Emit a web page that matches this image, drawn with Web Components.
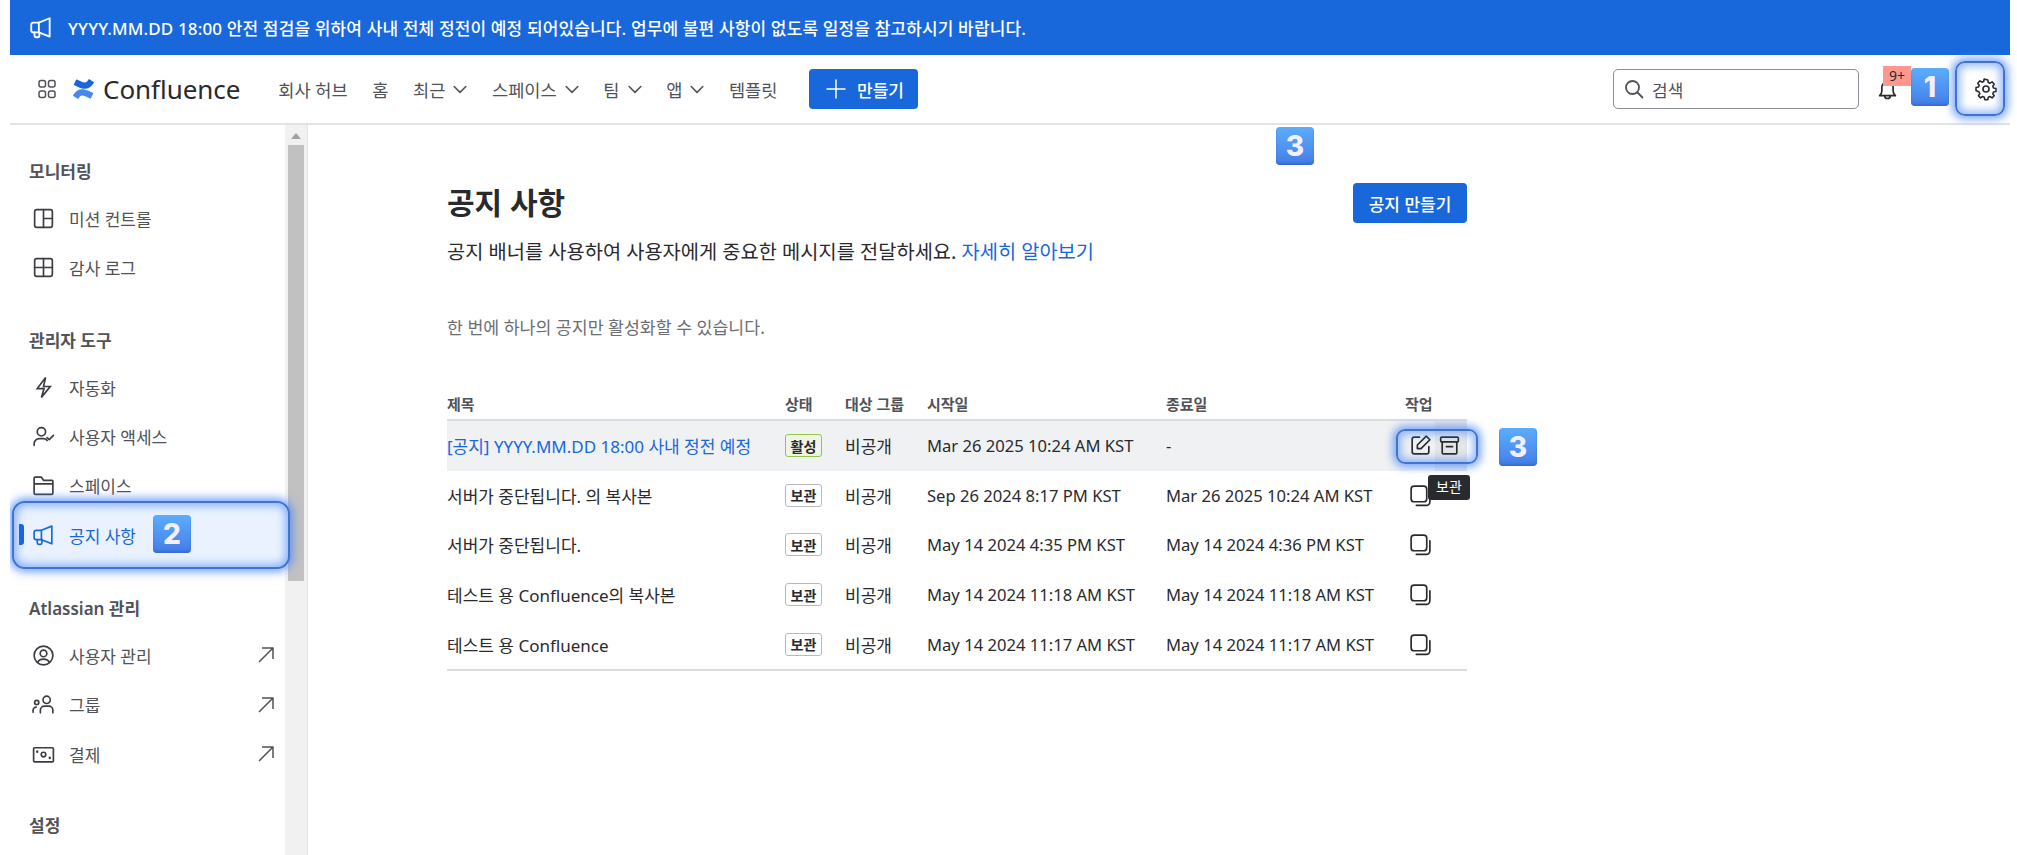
<!DOCTYPE html>
<html lang="ko"><head><meta charset="utf-8"><title>공지 사항</title>
<style>
html,body{margin:0;padding:0;background:#fff;height:855px;overflow:hidden;font-family:"Noto Sans","Noto Sans CJK KR",sans-serif;color:#292a2e}
</style></head><body>
<x-app></x-app>
<script>
const ICONS={
 mega:'<path d="M10 7v9l10 4V3L10 7Z"/><path d="M10 7H5a2 2 0 0 0-2 2v5a2 2 0 0 0 2 2h5"/><path d="M6 16v3a1.500 1.500 0 0 0 1.500 1.500H9a1.500 1.500 0 0 0 1.500-1.500v-3"/>',
 grid:'<rect x="4" y="3.500" width="6.500" height="6.500" rx="2"/><rect x="13.500" y="3.500" width="6.500" height="6.500" rx="2"/><rect x="4" y="14" width="6.500" height="6.500" rx="2"/><rect x="13.500" y="14" width="6.500" height="6.500" rx="2"/>',
 search:'<circle cx="10.500" cy="10.500" r="6.500"/><path d="m15.500 15.500 5 5"/>',
 bell:'<path d="M5 17.500h14c-1.400-1.300-2-2.600-2-4.500v-3a5 5 0 0 0-10 0v3c0 1.900-.6 3.200-2 4.500Z"/><path d="M9.500 17.500a2.500 2.500 0 0 0 5 0"/>',
 gear:'<circle cx="12" cy="12" r="3"/><path d="m13.800 3 .5 2.500 1.700.7 2.100-1.400 2.100 2.500-1.400 2 .7 1.700 2.500.5v3l-2.500.5-.7 1.700 1.400 2.100-2.100 2.100-2.100-1.400-1.700.7-.5 2.500h-3l-.5-2.500-1.700-.7-2.100 1.400-2.100-2.100 1.400-2.100-.7-1.700L2 13.500v-3l2.500-.5.7-1.700-1.400-2 2.100-2.500 2.100 1.400 1.700-.7.5-2.500Z"/>',
 chevron:'<path d="m5 9 7 7 7-7"/>',
 plus:'<path d="M12 3v18M3 12h18"/>',
 split:'<rect x="3.500" y="3.500" width="17" height="17" rx="2"/><path d="M12 3.500v17M12 12h8.500"/>',
 table:'<rect x="3.500" y="3.500" width="17" height="17" rx="2"/><path d="M12 3.500v17M3.500 12h17"/>',
 bolt:'<path d="M14 2.500 6 13h6.500L10 21.500 18.500 11H12Z" stroke-linejoin="miter"/>',
 usercheck:'<circle cx="10" cy="7.500" r="4"/><path d="M3 20.500v-1.500a5 5 0 0 1 5-5h4c1.500 0 2.800.7 3.500 1.800"/><path d="m15.500 13 2 2 4-4"/>',
 folder:'<path d="M4 20.500h16a1 1 0 0 0 1-1V8a1 1 0 0 0-1-1h-8L10 4H4a1 1 0 0 0-1 1v14.500a1 1 0 0 0 1 1ZM3 10.500h18"/>',
 usercircle:'<circle cx="12" cy="12" r="9"/><circle cx="12" cy="10" r="3.200"/><path d="M6.500 18.500c.8-2 2.500-3 5.500-3s4.700 1 5.500 3"/>',
 people:'<circle cx="15" cy="7.500" r="3.500"/><circle cx="5.500" cy="10" r="2"/><path d="M9 20v-2.500a4 4 0 0 1 4-4h4a4 4 0 0 1 4 4V20"/><path d="M2 19.500v-2a3 3 0 0 1 3-3"/>',
 money:'<rect x="2.500" y="5.500" width="19" height="13.500" rx="1"/><circle cx="12" cy="12" r="2.200"/><path d="M6 9v.5M18 15v.5" stroke-width="2.200"/>',
 ext:'<path d="M5 19 19 5M8 5h11v11" stroke-linecap="butt"/>',
 edit:'<path d="M11 4H6a2 2 0 0 0-2 2v12a2 2 0 0 0 2 2h12a2 2 0 0 0 2-2v-5"/><path d="M9 15v-3.500L17.500 3 21 6.500 12.500 15Z"/>',
 archive:'<rect x="3.500" y="4" width="17" height="4.500" rx="1"/><path d="M5 8.500V19a1 1 0 0 0 1 1h12a1 1 0 0 0 1-1V8.500M9 13h6"/>',
 copy:'<rect x="3" y="3" width="15" height="15" rx="3"/><path d="M21 8.500V18a3.500 3.500 0 0 1-3.500 3.500H8"/>'
};
const GLOW='box-shadow:0 0 9px 3px rgba(75,135,250,.75),inset 0 0 9px 3px rgba(75,135,250,.6)';
function def(name,css,html){
 class E extends HTMLElement{
  constructor(){super();this.attachShadow({mode:'open'});}
  connectedCallback(){ if(this._d)return; this._d=1;
   const h=typeof html==='function'?html(this):html;
   this.shadowRoot.innerHTML='<style>'+css+'</style>'+h; }
 }
 customElements.define(name,E);
}
def('x-icon',':host{display:inline-flex;flex:none;width:var(--s,20px);height:var(--s,20px)}svg{width:100%;height:100%;fill:none;stroke:currentColor;stroke-width:var(--w,1.700);stroke-linecap:round;stroke-linejoin:round}',
 el=>'<svg viewBox="0 0 24 24">'+ICONS[el.getAttribute('name')]+'</svg>');

def('x-step',':host{position:absolute;display:flex;align-items:center;justify-content:center;width:38px;height:38px;border-radius:4px;background:linear-gradient(180deg,#5cadfb 0%,#4b8cf0 70%,#4279e0 100%);box-shadow:inset 0 -2px 2px rgba(40,90,200,.45);color:#f4efff;font:800 28px/1 "Inter","Noto Sans",sans-serif;z-index:5}','<slot></slot>');

def('x-banner',':host{display:flex;align-items:center;height:55px;background:#1868db;color:#fff;font-size:17px;letter-spacing:.14px;font-weight:500;padding-left:18px;--s:26px;--w:1.700}span{margin-left:14px}','<x-icon name="mega"></x-icon><span><slot></slot></span>');

def('x-nav-link',':host{display:inline-flex;align-items:center;gap:8px;color:#505258;font-size:17.600px;--s:20px;--w:1.900;white-space:nowrap}x-icon{margin:0 -3px}',
 el=>'<slot></slot>'+(el.hasAttribute('menu')?'<x-icon name="chevron"></x-icon>':''));

def('x-button',':host{display:inline-flex;align-items:center;justify-content:center;height:40px;border-radius:4px;background:#1868db;color:#fff;font-size:17px;font-weight:500;box-sizing:border-box;white-space:nowrap;gap:9px}','<slot></slot>');

def('x-topnav',`
 :host{display:flex;align-items:center;height:68px;border-bottom:2px solid #e2e3e5;position:relative;padding:0 4px 0 25px;--gray:#505258}
 .grid{color:#505258;--s:24px;--w:1.500}
 .logo{display:flex;align-items:center;margin-left:14px;gap:9px}
 .logo svg{width:21px;height:20px}
 .logo b{font:400 26px/1 "Noto Sans",sans-serif;color:#292a2e;letter-spacing:-.05px}
 nav{display:flex;align-items:center;margin-left:38px;gap:24.600px}
 x-button{margin-left:32px;width:109px;--s:24px;--w:1.500}
 .right{margin-left:auto;display:flex;align-items:center}
 .search{width:246px;height:40px;box-sizing:border-box;border:1px solid #8c8f97;border-radius:5px;display:flex;align-items:center;padding-left:8px;gap:6px;color:#505258;font-size:17px;--s:24px;--w:1.800}
 .bell{position:relative;width:40px;height:40px;margin-left:8px;display:flex;align-items:center;justify-content:center;color:#292a2e;--s:27px;--w:1.500}
 .count{position:absolute;left:16px;top:-3px;width:28px;height:20px;background:#fd9891;color:#292a2e;font-size:14px;line-height:20px;text-align:center}
 .gear{width:40px;height:40px;margin-left:59px;display:flex;align-items:center;justify-content:center;color:#292a2e;--s:24px;--w:1.600;position:relative}
 .hl{position:absolute;left:-11px;top:-8px;width:50px;height:55px;box-sizing:border-box;border:2px solid #3f74d1;border-radius:10px;${GLOW}}
 x-step{left:1901px;top:13px}
`,`<x-icon class="grid" name="grid"></x-icon>
 <div class="logo"><svg viewBox="0 0 24 24" preserveAspectRatio="none"><path fill="#4688ec" d="M.87 18.257c-.248.382-.53.875-.763 1.245a.764.764 0 0 0 .255 1.04l4.965 3.054a.764.764 0 0 0 1.058-.26c.199-.332.454-.763.733-1.221 1.967-3.247 3.945-2.853 7.508-1.146l4.957 2.337a.764.764 0 0 0 1.028-.382l2.364-5.346a.764.764 0 0 0-.382-1 599.851 599.851 0 0 1-4.965-2.361C10.911 10.97 5.224 11.185.87 18.257z"/><path fill="#1868db" d="M23.131 5.743c.248-.382.53-.875.763-1.245a.764.764 0 0 0-.255-1.04L18.674.404a.764.764 0 0 0-1.058.26c-.199.332-.454.763-.733 1.221-1.967 3.247-3.945 2.853-7.508 1.146L4.417.694a.764.764 0 0 0-1.028.382L1.025 6.422a.764.764 0 0 0 .382 1c1.039.49 3.105 1.467 4.965 2.361 6.72 3.24 12.407 3.026 16.759-4.04z"/></svg><b>Confluence</b></div>
 <nav><x-nav-link>회사 허브</x-nav-link><x-nav-link>홈</x-nav-link><x-nav-link menu>최근</x-nav-link><x-nav-link menu>스페이스</x-nav-link><x-nav-link menu>팀</x-nav-link><x-nav-link menu>앱</x-nav-link><x-nav-link>템플릿</x-nav-link></nav>
 <x-button><x-icon name="plus"></x-icon>만들기</x-button>
 <div class="right"><div class="search"><x-icon name="search"></x-icon>검색</div>
 <div class="bell"><x-icon name="bell"></x-icon><span class="count">9+</span></div>
 <div class="gear"><div class="hl"></div><x-icon name="gear"></x-icon></div></div>
 <x-step>1</x-step>`);

def('x-nav-item',`
 :host{display:flex;align-items:center;height:49.300px;padding-left:23px;padding-right:10px;color:#505258;font-size:17px;position:relative;--s:25px;--w:1.600}
 .ic{color:#3b3d42;display:flex;width:20px;justify-content:center}
 .t{margin-left:16px;flex:1;white-space:nowrap}
 .ext{--s:24px;--w:1.500;color:#505258;margin-right:-3px}
 :host([active]){color:#1868db}
 :host([active]) .ic{color:#1868db}
 .hl{position:absolute;left:2px;right:-5px;top:-9.500px;bottom:-9.500px;box-sizing:border-box;background:#e9f2fe;border:2px solid #3f74d1;border-radius:13px;${GLOW}}
 .bar{position:absolute;left:9px;top:14px;width:5px;height:21px;border-radius:0 3px 3px 0;background:#1868db}
 .ic,.t{position:relative}
 x-step{left:143px;top:5px}
`,el=>(el.hasAttribute('active')?'<div class="hl"></div><div class="bar"></div>':'')+
 '<span class="ic"><x-icon name="'+el.getAttribute('icon')+'"></x-icon></span><span class="t"><slot></slot></span>'+
 (el.hasAttribute('ext')?'<x-icon class="ext" name="ext"></x-icon>':'')+
 (el.hasAttribute('active')?'<x-step>2</x-step>':''));

def('x-nav-section',`
 :host{display:block;padding-top:35px}
 h3{margin:0 0 10px 19px;font-size:17px;line-height:24px;font-weight:600;color:#505258}
`,el=>'<h3>'+el.getAttribute('title')+'</h3><slot></slot>');

def('x-sidebar',`
 :host{display:flex;flex:none;width:298px;height:730px;overflow:hidden;border-right:1px solid #e2e3e5;box-sizing:border-box}
 .c{width:275px;flex:none;position:relative;z-index:1}
 .sb{width:22px;flex:none;background:#f1f1f1;position:relative;display:flex;flex-direction:column;align-items:center}
 .up{width:0;height:0;border:5px solid transparent;border-top:0;border-bottom:6px solid #a3a3a3;margin:8px 0 6px}
 .th{width:16px;height:436px;background:#c1c1c1}
`,'<div class="c"><slot></slot></div><div class="sb"><div class="up"></div><div class="th"></div></div>');

const COLS='grid-template-columns:338px 60px 82px 239px 239px 62px';
def('x-lozenge',`:host{display:inline-flex;align-items:center;justify-content:center;width:37px;height:23px;box-sizing:border-box;border:1px solid #b7b9be;border-radius:3px;font-size:14px;font-weight:700;color:#292a2e;background:#fff}
 :host([ok]){border-color:#94c748;background:#eff4e4}`,'<slot></slot>');

def('x-row',`
 :host{display:grid;${COLS};align-items:center;height:49.600px;font-size:17px;color:#292a2e;position:relative}
 :host([sel]){background:#f0f1f2}
 .d{font-size:16.600px}
 .act{position:relative;display:flex;align-items:center;--s:25px;--w:1.600;height:32px}
 .b{width:30px;height:32px;display:flex;align-items:center;justify-content:center;position:relative}
 .arch{background:rgba(0,0,0,.045);width:32px;height:49.600px;flex:none;justify-content:flex-start;padding-left:2px;box-sizing:border-box}
 .hl{position:absolute;left:-9px;top:-1px;width:82px;height:35px;box-sizing:border-box;border:2px solid #3f74d1;border-radius:9px;z-index:1;${GLOW}}
 .tip{position:absolute;left:-7px;top:54px;width:42px;height:25px;background:#292a2e;color:#fff;font-size:14px;line-height:24px;text-align:center;border-radius:3px;z-index:4}
 a{color:#1868db;text-decoration:none}
 x-step{left:94px;top:-2px}
 div{white-space:nowrap}
`,el=>{const s=el.hasAttribute('sel');const t=el.getAttribute('t');
 return '<div>'+(s?'<a>'+t+'</a>':t)+'</div><div style="display:flex"><x-lozenge '+(s?'ok':'')+'>'+(s?'활성':'보관')+'</x-lozenge></div><div>비공개</div><div class="d">'+el.getAttribute('a')+'</div><div class="d">'+el.getAttribute('b')+'</div>'+
 '<div class="act">'+(s?'<div class="hl"></div><div class="b"><x-icon name="edit"></x-icon></div><div class="b arch"><x-icon name="archive"></x-icon><div class="tip">보관</div></div><x-step>3</x-step>':'<div class="b"><x-icon name="copy"></x-icon></div>')+'</div>';});

def('x-table',`
 :host{display:block;width:1020px;margin-top:52px}
 .h{display:grid;${COLS};height:27px;border-bottom:2px solid #dcdde0;font-size:15px;font-weight:600;color:#505258;line-height:24px}
 .f{border-bottom:2px solid #dcdde0;}
`,'<div class="h"><div>제목</div><div>상태</div><div>대상 그룹</div><div>시작일</div><div>종료일</div><div>작업</div></div><div class="f"><slot></slot></div>');

def('x-main',`
 :host{display:block;flex:1;position:relative;padding:58px 0 0 139px;box-sizing:border-box;height:730px}
 .top{display:flex;justify-content:space-between;align-items:center;width:1020px;height:40px}
 h1{margin:0;font-size:30px;line-height:40px;font-weight:600;color:#292a2e}
 x-button{width:114px}
 p{margin:15px 0 0;font-size:19.800px;line-height:28px;color:#292a2e;white-space:nowrap}
 a{color:#1868db;text-decoration:none}
 .note{margin-top:50px;font-size:17.300px;line-height:24px;color:#6b6e76}
 x-step{left:968px;top:2px}
`,`<x-step>3</x-step><div class="top"><h1>공지 사항</h1><x-button>공지 만들기</x-button></div>
 <p>공지 배너를 사용하여 사용자에게 중요한 메시지를 전달하세요. <a>자세히 알아보기</a></p>
 <p class="note">한 번에 하나의 공지만 활성화할 수 있습니다.</p><slot></slot>`);

def('x-app',`
 :host{display:block;height:855px;padding:0 7px 0 10px;overflow:hidden;box-sizing:border-box}
 .body{display:flex}
`,`<x-banner>YYYY.MM.DD 18:00 안전 점검을 위하여 사내 전체 정전이 예정 되어있습니다. 업무에 불편 사항이 없도록 일정을 참고하시기 바랍니다.</x-banner>
 <x-topnav></x-topnav>
 <div class="body"><x-sidebar>
  <x-nav-section title="모니터링"><x-nav-item icon="split">미션 컨트롤</x-nav-item><x-nav-item icon="table">감사 로그</x-nav-item></x-nav-section>
  <x-nav-section title="관리자 도구" style="padding-top:36px"><x-nav-item icon="bolt">자동화</x-nav-item><x-nav-item icon="usercheck">사용자 액세스</x-nav-item><x-nav-item icon="folder">스페이스</x-nav-item><x-nav-item icon="mega" active>공지 사항</x-nav-item></x-nav-section>
  <x-nav-section title="Atlassian 관리" style="padding-top:37px"><x-nav-item icon="usercircle" ext>사용자 관리</x-nav-item><x-nav-item icon="people" ext>그룹</x-nav-item><x-nav-item icon="money" ext>결제</x-nav-item></x-nav-section>
  <x-nav-section title="설정"></x-nav-section>
 </x-sidebar>
 <x-main><x-table>
  <x-row sel t="[공지] YYYY.MM.DD 18:00 사내 정전 예정" a="Mar 26 2025 10:24 AM KST" b="-"></x-row>
  <x-row t="서버가 중단됩니다. 의 복사본" a="Sep 26 2024 8:17 PM KST" b="Mar 26 2025 10:24 AM KST"></x-row>
  <x-row t="서버가 중단됩니다." a="May 14 2024 4:35 PM KST" b="May 14 2024 4:36 PM KST"></x-row>
  <x-row t="테스트 용 Confluence의 복사본" a="May 14 2024 11:18 AM KST" b="May 14 2024 11:18 AM KST"></x-row>
  <x-row t="테스트 용 Confluence" a="May 14 2024 11:17 AM KST" b="May 14 2024 11:17 AM KST"></x-row>
 </x-table></x-main></div>`);
</script>
</body></html>
